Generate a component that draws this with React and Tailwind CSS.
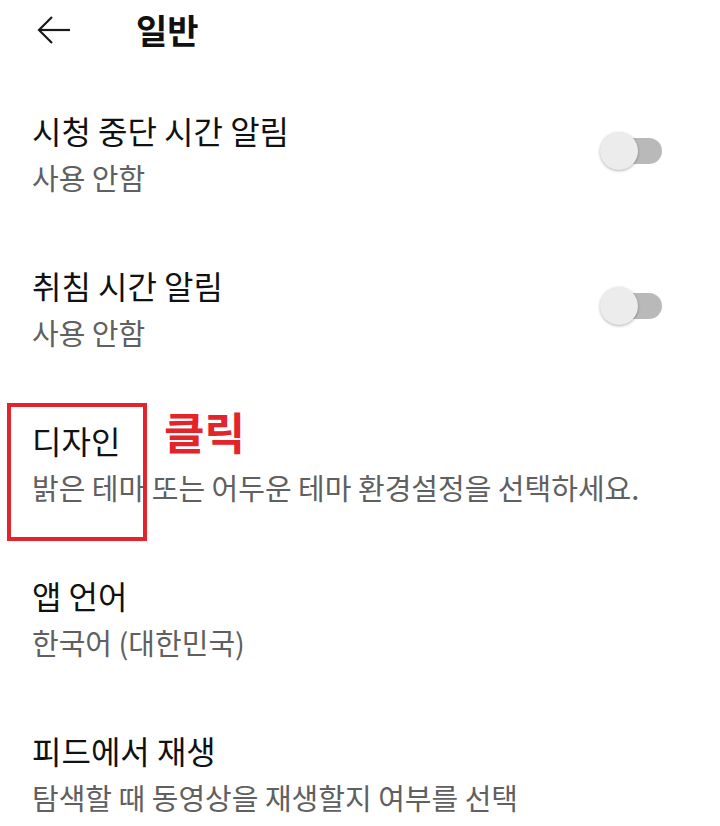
import React from 'react';

const rows = [
  { title: '시청 중단 시간 알림', sub: '사용 안함', toggle: true },
  { title: '취침 시간 알림', sub: '사용 안함', toggle: true },
  { title: '디자인', sub: '밝은 테마 또는 어두운 테마 환경설정을 선택하세요.', mark: true },
  { title: '앱 언어', sub: '한국어 (대한민국)' },
  { title: '피드에서 재생', sub: '탐색할 때 동영상을 재생할지 여부를 선택' },
];

const Toggle = () => (
  <div className="relative w-[62px] h-[38px] mr-[58px] -mt-[6px]">
    <div className="absolute right-0 top-[6px] w-[44px] h-[26px] rounded-full bg-[#b9b9b9]" />
    <div className="absolute left-0 top-0 w-[38px] h-[38px] rounded-full bg-[#ececec] shadow-[0_1px_3px_rgba(0,0,0,0.3)]" />
  </div>
);

const App = () => {
  return (
    <div
      className="w-[720px] h-[826px] overflow-hidden bg-white text-[#111]"
      style={{ fontFamily: '"Noto Sans CJK KR", "Noto Sans", sans-serif' }}
    >
      <div className="flex items-center h-[60px] pl-[36px]">
        <svg width="36" height="30" viewBox="0 0 36 30" fill="none" stroke="#1a1a1a" strokeWidth="2.2">
          <path d="M34 15H3" />
          <path d="M16 2L3 15l13 13" />
        </svg>
        <h1 className="ml-[64px] text-[34px] font-bold leading-[40px]">일반</h1>
      </div>
      <div className="h-[16px]" />

      {rows.map((r) => (
        <div key={r.title} className="relative flex items-center h-[155px] pl-[32px]">
          <div className="flex-1">
            <div className="text-[32px] leading-[40px]">{r.title}</div>
            <div className="mt-[7px] text-[29px] leading-[40px] text-[#606060]">{r.sub}</div>
          </div>
          {r.toggle && <Toggle />}
          {r.mark && (
            <>
              <div className="absolute left-[7px] top-[17px] w-[140px] h-[138px] border-[4px] border-[#e3242b]" />
              <div className="absolute left-[164px] top-[18px] text-[44px] leading-[54px] font-bold text-[#e3242b]">
                클릭
              </div>
            </>
          )}
        </div>
      ))}
    </div>
  );
};

export default App;
